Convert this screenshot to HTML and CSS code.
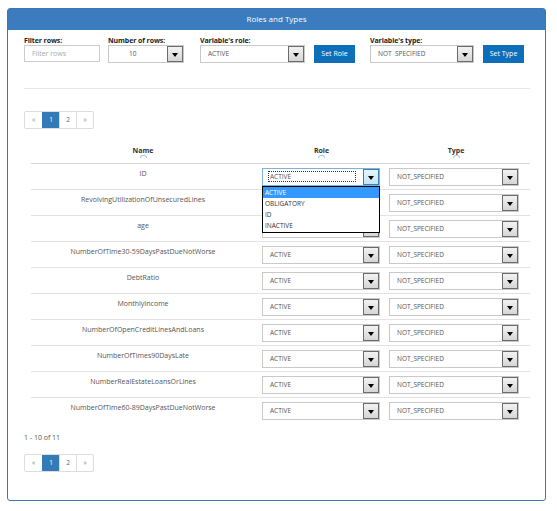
FILE: index.html
```html
<!DOCTYPE html>
<html>
<head>
<meta charset="utf-8">
<link rel="stylesheet" href="styles.css">
</head>
<body>
<div class="panel">
  <div class="panel-heading">Roles and Types</div>
  <div class="panel-body">
    <div class="controls">
      <div class="group">
        <div class="lbl">Filter rows:</div>
        <div class="input">Filter rows</div>
      </div>
      <div class="group g-num">
        <div class="lbl">Number of rows:</div>
        <div class="sel w-num num"><span class="val">10</span><span class="arrow"></span></div>
      </div>
      <div class="group g-role">
        <div class="lbl">Variable's role:</div>
        <div class="sel w-role"><span class="val">ACTIVE</span><span class="arrow"></span></div>
      </div>
      <button class="btn">Set Role</button>
      <div class="group g-type">
        <div class="lbl">Variable's type:</div>
        <div class="sel w-type"><span class="val">NOT &nbsp;SPECIFIED</span><span class="arrow"></span></div>
      </div>
      <button class="btn">Set Type</button>
    </div>
    <div class="rule"></div>
    <div class="pager">
      <span class="pg">&laquo;</span><span class="pg active">1</span><span class="pg">2</span><span class="pg">&raquo;</span>
    </div>
    <div class="table">
      <div class="thead">
        <div class="th">Name<span class="caret"></span></div>
        <div class="th th-role">Role<span class="caret"></span></div>
        <div class="th">Type<span class="caret"></span></div>
      </div>
      <div class="tr">
        <div class="name">ID</div>
        <div class="cell role-cell">
          <div class="sel row-sel w-rrole focused"><span class="val"><span class="focus-ring">ACTIVE</span></span><span class="arrow"></span></div>
          <div class="dropdown">
            <div class="opt hl">ACTIVE</div>
            <div class="opt">OBLIGATORY</div>
            <div class="opt">ID</div>
            <div class="opt">INACTIVE</div>
          </div>
        </div>
        <div class="cell"><div class="sel row-sel w-rtype"><span class="val">NOT_SPECIFIED</span><span class="arrow"></span></div></div>
      </div>
      <div class="tr">
        <div class="name">RevolvingUtilizationOfUnsecuredLines</div>
        <div class="cell"><div class="sel row-sel w-rrole"><span class="val">ACTIVE</span><span class="arrow"></span></div></div>
        <div class="cell"><div class="sel row-sel w-rtype"><span class="val">NOT_SPECIFIED</span><span class="arrow"></span></div></div>
      </div>
      <div class="tr">
        <div class="name">age</div>
        <div class="cell"><div class="sel row-sel w-rrole"><span class="val">ACTIVE</span><span class="arrow"></span></div></div>
        <div class="cell"><div class="sel row-sel w-rtype"><span class="val">NOT_SPECIFIED</span><span class="arrow"></span></div></div>
      </div>
      <div class="tr">
        <div class="name">NumberOfTime30-59DaysPastDueNotWorse</div>
        <div class="cell"><div class="sel row-sel w-rrole"><span class="val">ACTIVE</span><span class="arrow"></span></div></div>
        <div class="cell"><div class="sel row-sel w-rtype"><span class="val">NOT_SPECIFIED</span><span class="arrow"></span></div></div>
      </div>
      <div class="tr">
        <div class="name">DebtRatio</div>
        <div class="cell"><div class="sel row-sel w-rrole"><span class="val">ACTIVE</span><span class="arrow"></span></div></div>
        <div class="cell"><div class="sel row-sel w-rtype"><span class="val">NOT_SPECIFIED</span><span class="arrow"></span></div></div>
      </div>
      <div class="tr">
        <div class="name">MonthlyIncome</div>
        <div class="cell"><div class="sel row-sel w-rrole"><span class="val">ACTIVE</span><span class="arrow"></span></div></div>
        <div class="cell"><div class="sel row-sel w-rtype"><span class="val">NOT_SPECIFIED</span><span class="arrow"></span></div></div>
      </div>
      <div class="tr">
        <div class="name">NumberOfOpenCreditLinesAndLoans</div>
        <div class="cell"><div class="sel row-sel w-rrole"><span class="val">ACTIVE</span><span class="arrow"></span></div></div>
        <div class="cell"><div class="sel row-sel w-rtype"><span class="val">NOT_SPECIFIED</span><span class="arrow"></span></div></div>
      </div>
      <div class="tr">
        <div class="name">NumberOfTimes90DaysLate</div>
        <div class="cell"><div class="sel row-sel w-rrole"><span class="val">ACTIVE</span><span class="arrow"></span></div></div>
        <div class="cell"><div class="sel row-sel w-rtype"><span class="val">NOT_SPECIFIED</span><span class="arrow"></span></div></div>
      </div>
      <div class="tr">
        <div class="name">NumberRealEstateLoansOrLines</div>
        <div class="cell"><div class="sel row-sel w-rrole"><span class="val">ACTIVE</span><span class="arrow"></span></div></div>
        <div class="cell"><div class="sel row-sel w-rtype"><span class="val">NOT_SPECIFIED</span><span class="arrow"></span></div></div>
      </div>
      <div class="tr last">
        <div class="name">NumberOfTime60-89DaysPastDueNotWorse</div>
        <div class="cell"><div class="sel row-sel w-rrole"><span class="val">ACTIVE</span><span class="arrow"></span></div></div>
        <div class="cell"><div class="sel row-sel w-rtype"><span class="val">NOT_SPECIFIED</span><span class="arrow"></span></div></div>
      </div>
    </div>
    <div class="count">1 - 10 of 11</div>
    <div class="pager pager2">
      <span class="pg">&laquo;</span><span class="pg active">1</span><span class="pg">2</span><span class="pg">&raquo;</span>
    </div>
  </div>
</div>
</body>
</html>
```
FILE: styles.css
```css
* { box-sizing: border-box; }
html, body { margin: 0; padding: 0; background: #fff; }
body {
  font-family: "Open Sans", "Noto Sans", sans-serif;
  font-size: 7px;
  color: #555;
  width: 557px;
  height: 511px;
  overflow: hidden;
}
.panel {
  margin: 8px 0 0 7px;
  width: 539px;
  height: 493px;
  border: 1px solid #3b78b3;
  border-radius: 3px;
}
.panel-heading {
  height: 21px;
  background: #3a7cbd;
  color: #fff;
  font-size: 8px;
  line-height: 19px;
  text-align: center;
}
.panel-body {
  padding: 7px 13px 0 16px;
  position: relative;
}
.controls {
  display: flex;
  align-items: flex-end;
}
.group { display: flex; flex-direction: column; }
.lbl {
  font-weight: bold;
  color: #222;
  font-size: 7px;
  line-height: 8px;
  height: 8px;
  letter-spacing: -0.1px;
}
.input {
  width: 76px;
  height: 17px;
  border: 1px solid #ccc;
  color: #aaa;
  line-height: 15px;
  padding-left: 7px;
  margin-bottom: 1px;
}
.g-num { margin-left: 8px; }
.g-role { margin-left: 16px; }
.g-type { margin-left: 15px; }
.sel {
  position: relative;
  height: 18px;
  border: 1px solid #c9c9c9;
  background: #fff;
  color: #555;
  line-height: 16px;
  padding-left: 7px;
  font-size: 6.5px;
}
.sel.num { padding-left: 20px; }
.w-num { width: 76px; }
.w-role { width: 105px; }
.w-type { width: 104px; }
.arrow {
  position: absolute;
  right: 0;
  top: 0;
  width: 16px;
  height: 16px;
  border: 1px solid #6b6b6b;
  background: linear-gradient(#f2f2f2, #d6d6d6);
}
.arrow::after {
  content: "";
  position: absolute;
  left: 4px;
  top: 6px;
  border-left: 3.5px solid transparent;
  border-right: 3.5px solid transparent;
  border-top: 4px solid #000;
}
.btn {
  margin-left: 9px;
  width: 41px;
  height: 18px;
  border: 0;
  background: #0d6fba;
  color: #fff;
  font-family: "Open Sans", "Noto Sans", sans-serif;
  font-size: 7px;
  padding: 0;
  line-height: 18px;
}
.rule {
  margin-top: 25px;
  width: 506px;
  border-top: 1px solid #e6e6e6;
}
.pager {
  margin-top: 22px;
  display: flex;
  width: max-content;
  border: 1px solid #ddd;
  border-radius: 2px;
  height: 18px;
}
.pg {
  width: 17px;
  height: 16px;
  line-height: 16px;
  text-align: center;
  color: #4a6a8a;
  font-size: 6.5px;
  border-left: 1px solid #ddd;
}
.pg:first-child { border-left: 0; color: #888; }
.pg:last-child { color: #888; }
.pg.active { background: #337ab7; color: #fff; border-left-color: #337ab7; }
.table {
  margin: 11px 0 0 7px;
  width: 499px;
}
.thead, .tr {
  display: grid;
  grid-template-columns: 224px 127px 148px;
}
.thead {
  height: 24px;
  border-bottom: 1px solid #d8d8d8;
}
.th {
  text-align: center;
  font-weight: bold;
  color: #333;
  font-size: 7px;
  padding-top: 6px;
  line-height: 9px;
  position: relative;
}
.th-role { padding-left: 6px; }
.caret {
  display: block;
  margin: 0 auto;
  width: 7px;
  height: 3px;
  border-top: 1px solid #a9cde6;
  border-left: 1px solid #a9cde6;
  border-right: 1px solid #a9cde6;
  border-radius: 4px 4px 0 0;
}
.tr {
  height: 26px;
  border-bottom: 1px solid #e2e2e2;
}
.tr.last { border-bottom: 0; }
.name {
  text-align: center;
  padding-top: 5px;
  line-height: 9px;
  color: #555;
}
.cell { padding: 4px 0 0 7px; position: relative; }
.row-sel { height: 18px; }
.w-rrole { width: 118px; }
.w-rtype { width: 130px; }
.focused { border-color: #7fb3da; }
.focused .arrow {
  border-color: #3c7fb1;
  background: linear-gradient(#e5f4fc, #c4e5f6);
}
.focus-ring {
  display: inline-block;
  border: 1px dotted #333;
  line-height: 9px;
  padding: 0 2px 0 1px;
  margin-left: -2px;
  width: 88px;
}
.dropdown {
  position: absolute;
  left: 7px;
  top: 22px;
  width: 118px;
  background: #fff;
  border: 1px solid #000;
  z-index: 2;
  padding-bottom: 1px;
}
.opt {
  height: 11px;
  line-height: 11px;
  padding-left: 2px;
  color: #333;
  font-size: 6.5px;
}
.opt.hl { background: #3399ff; color: #fff; }
.count {
  margin-top: 9px;
  line-height: 9px;
  color: #555;
}
.pager2 { margin-top: 12px; }
```
